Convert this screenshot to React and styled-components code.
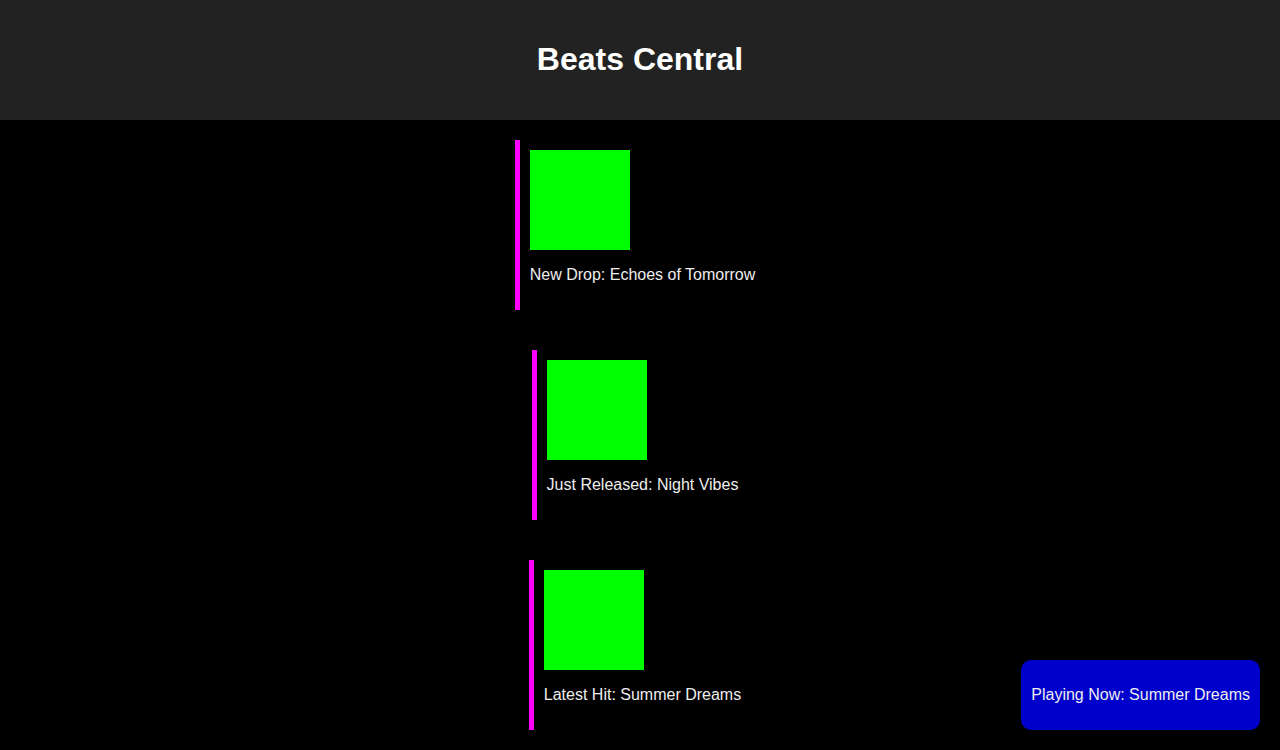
import React from 'react';
import styled, { createGlobalStyle } from 'styled-components';

const GlobalStyle = createGlobalStyle`
  body {
    margin: 0;
    background: #000;
    color: #eee;
    font-family: 'Liberation Sans', Arial, sans-serif;
  }
`;

const Header = styled.header`
  background: #222;
  padding: 20px;
  text-align: center;
`;

const Title = styled.h1`
  margin: 21.44px 0;
  font-size: 32px;
  font-weight: bold;
  color: #fff;
`;

const Feed = styled.main`
  display: flex;
  flex-direction: column;
  align-items: center;
  gap: 40px;
  padding: 20px 0;
`;

const Card = styled.div`
  border-left: 5px solid #ff00ff;
  padding: 10px;
`;

const Cover = styled.div`
  width: 100px;
  height: 100px;
  background: #00ff00;
`;

const Caption = styled.p`
  margin: 16px 0;
  font-size: 16px;
  line-height: 18px;
`;

const NowPlaying = styled.div`
  position: fixed;
  right: 20px;
  bottom: 20px;
  background: #0000cc;
  color: #eee;
  border-radius: 10px;
  padding: 26px 10px;
  font-size: 16px;
  line-height: 18px;
`;

const releases = [
  'New Drop: Echoes of Tomorrow',
  'Just Released: Night Vibes',
  'Latest Hit: Summer Dreams',
];

export default function App() {
  return (
    <>
      <GlobalStyle />
      <Header>
        <Title>Beats Central</Title>
      </Header>
      <Feed>
        {releases.map((r) => (
          <Card key={r}>
            <Cover />
            <Caption>{r}</Caption>
          </Card>
        ))}
      </Feed>
      <NowPlaying>Playing Now: Summer Dreams</NowPlaying>
    </>
  );
}
